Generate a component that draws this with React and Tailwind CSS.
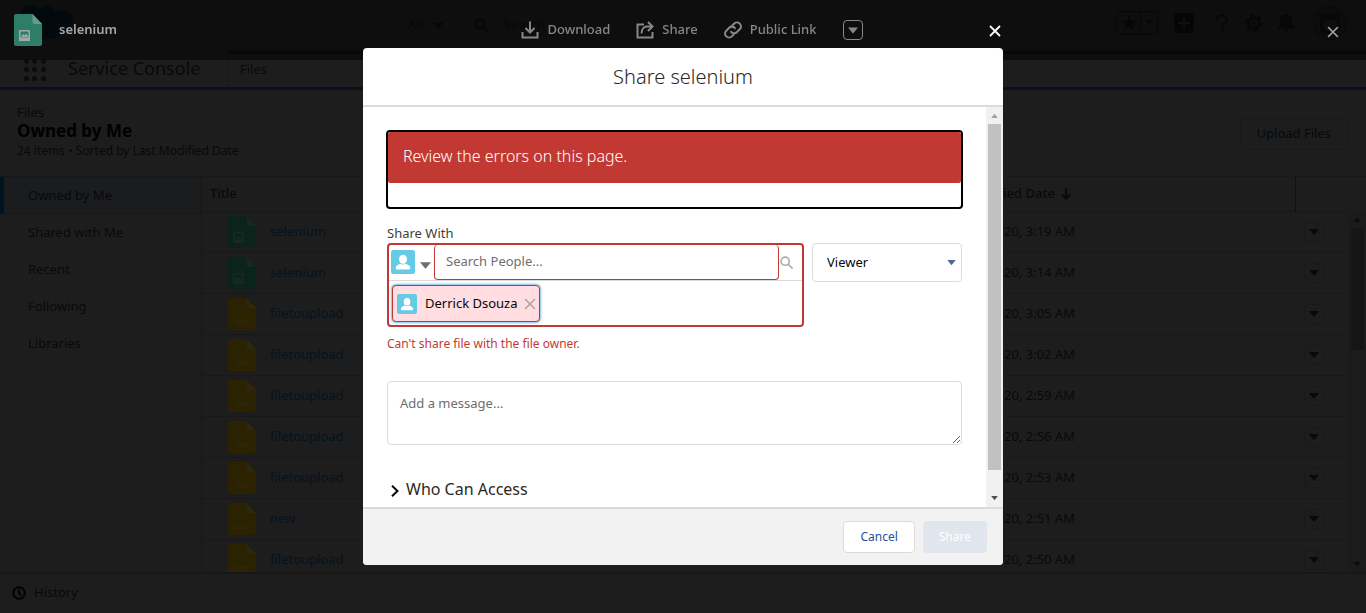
import React from "react";

const rows = [
  ["selenium", "3:19 AM", "image"],
  ["selenium", "3:14 AM", "image"],
  ["filetoupload", "3:05 AM", "txt"],
  ["filetoupload", "3:02 AM", "txt"],
  ["filetoupload", "2:59 AM", "txt"],
  ["filetoupload", "2:56 AM", "txt"],
  ["filetoupload", "2:53 AM", "txt"],
  ["new", "2:51 AM", "txt"],
  ["filetoupload", "2:50 AM", "txt"],
];

const views = ["Owned by Me", "Shared with Me", "Recent", "Following", "Libraries"];

function Caret({ className }) {
  return (
    <svg viewBox="0 0 10 6" className={className} fill="currentColor" aria-hidden="true">
      <path d="M0 0h10L5.500 5.600q-.5.5-1 0z" />
    </svg>
  );
}

function Cross({ className, strokeWidth = 2 }) {
  return (
    <svg viewBox="0 0 12 12" className={className} fill="none" stroke="currentColor" strokeWidth={strokeWidth} strokeLinecap="round" aria-hidden="true">
      <path d="M1.500 1.500l9 9M10.500 1.500l-9 9" />
    </svg>
  );
}

function SearchIcon({ className, strokeWidth = 2 }) {
  return (
    <svg viewBox="0 0 14 14" className={className} fill="none" stroke="currentColor" strokeWidth={strokeWidth} strokeLinecap="round" aria-hidden="true">
      <circle cx="5.600" cy="5.600" r="4.400" />
      <path d="M9 9l4 4" />
    </svg>
  );
}

function FileIcon({ kind, body, fold, mark, className }) {
  return (
    <svg viewBox="0 0 28 32" className={className} aria-hidden="true">
      <path d="M2 0h16.500l9.500 10v20a2 2 0 0 1-2 2H2a2 2 0 0 1-2-2V2a2 2 0 0 1 2-2z" fill={body} />
      <path d="M18.500 0l9.500 10h-7.500a2 2 0 0 1-2-2z" fill={fold} />
      {kind === "image" ? (
        <>
          <rect x="5" y="16" width="11" height="11" rx="0.500" fill={mark} />
          <rect x="6.500" y="17.500" width="8" height="6" fill={body} />
          <path d="M7 23l2-3 1.500 1.500 1.500-2 2.500 3.500z" fill={mark} />
        </>
      ) : (
        <text x="13" y="26.500" textAnchor="middle" fontSize="7.500" fill={mark} fontFamily="Noto Sans, sans-serif">
          TXT
        </text>
      )}
    </svg>
  );
}

function Person({ className }) {
  return (
    <svg viewBox="0 0 24 24" className={className} aria-hidden="true">
      <rect width="24" height="24" rx="2.500" fill="#65cae4" />
      <ellipse cx="12" cy="9.300" rx="4" ry="4.600" fill="#fff" />
      <path d="M4.800 18.800v-1.300c0-1.900 2.400-3 4.600-3.800 1.600 1.100 3.600 1.100 5.200 0 2.200.8 4.600 1.900 4.600 3.800v1.300q0 .8-.8.8H5.600q-.8 0-.8-.8z" fill="#fff" />
    </svg>
  );
}

function GlobalHeader() {
  return (
    <header className="flex h-[51px] shrink-0 items-start border-b border-[#191919] text-[#0f0f0f]">
      <svg viewBox="0 0 54 38" className="ml-5 mt-1 h-[38px] w-[54px] shrink-0" fill="#04141c" aria-hidden="true">
        <circle cx="11" cy="12" r="11" />
        <circle cx="27" cy="12" r="10" />
        <circle cx="42" cy="17" r="11" />
        <circle cx="9" cy="22" r="9" />
        <circle cx="20" cy="27" r="10" />
        <circle cx="31" cy="25" r="10" />
      </svg>
      <div className="ml-[321px] mt-[9px] flex h-8 w-[537px] items-center rounded border border-[#181818] text-[13px]">
        <button type="button" className="flex h-full w-[58px] items-center justify-between border-r border-[#181818] pl-3 pr-[9px]">
          All <Caret className="h-[7px] w-[11px]" />
        </button>
        <SearchIcon className="ml-5 h-3.5 w-3.5" />
        <input aria-label="Search" placeholder="Search" className="ml-4 min-w-0 flex-1 bg-transparent placeholder:text-[#0f0f0f]" />
      </div>
      <div className="ml-auto mr-[19px] mt-[5px] flex h-[35px] items-center">
        <div className="flex h-6 w-[42px] rounded border border-[#0e0e0e]">
          <button type="button" aria-label="Favorite" className="flex w-6 items-center justify-center border-r border-[#0e0e0e]">
            <svg viewBox="0 0 24 24" className="h-4 w-4" fill="#0c0c0c"><path d="M12 0l3.100 8.500H24l-7.200 5.400L19.500 23 12 17.600 4.500 23l2.700-9.100L0 8.500h8.900z" /></svg>
          </button>
          <button type="button" aria-label="Favorites list" className="flex flex-1 items-center justify-center">
            <Caret className="h-[5px] w-2" />
          </button>
        </div>
        <svg viewBox="0 0 20 20" className="ml-4 h-5 w-5"><rect width="20" height="20" rx="4" fill="#0c0c0c" /><path d="M10 4v12M4 10h12" stroke="#1d1d1d" strokeWidth="2" /></svg>
        <svg viewBox="0 0 12 18" className="ml-[22px] h-[18px] w-3" fill="none" stroke="#0f0f0f" strokeWidth="2.200" strokeLinecap="round"><path d="M1.200 5.500C1.200 0 10.800 0 10.800 5.500c0 3.500-4.500 3.200-4.500 7" /><circle cx="6.300" cy="16.600" r=".4" /></svg>
        <svg viewBox="0 0 20 20" className="ml-[17px] h-[18px] w-[18px]" fill="none" stroke="#0e0e0e"><circle cx="10" cy="10" r="6" strokeWidth="3" /><circle cx="10" cy="10" r="8.500" strokeWidth="2.500" strokeDasharray="4.400 4.500" /><path d="M11 6.500L8.500 10.500h3L9.500 14" strokeWidth="1.200" /></svg>
        <svg viewBox="0 0 18 18" className="ml-3.5 h-[18px] w-[18px]" fill="#0f0f0f"><path d="M9 0c4 0 6 2.800 6 6.500 0 4 .5 5.500 2.500 6.500v1.500H.5V13c2-1 2.500-2.500 2.500-6.500C3 2.800 5 0 9 0zM6.500 15.500h5q-.5 2-2.500 2t-2.500-2z" /></svg>
        <svg viewBox="0 0 34 34" className="ml-[18px] h-[34px] w-[34px]"><circle cx="17" cy="17" r="16.500" fill="#191919" stroke="#111" /><path d="M8 6l5 2h8l5-2 1 7v9l-5 6H12l-5-6v-9z" fill="#0c1013" /><path d="M10 17l5-4 3 2 4-1 3 4-2 6-6 2-6-3z" fill="#1e1e1e" /></svg>
      </div>
    </header>
  );
}

function ConsoleNav() {
  return (
    <nav className="flex h-[39px] shrink-0 border-b-[3px] border-[#160a1e] text-[#090909]">
      <button type="button" aria-label="App launcher" className="ml-6 mt-2 grid h-[22px] w-[22px] grid-cols-3 gap-[3px]">
        {Array.from({ length: 9 }, (_, i) => (
          <span key={i} className="h-[5px] w-[5px] rounded-full bg-[#0c0c0c]" />
        ))}
      </button>
      <span className="ml-[22px] mt-[3px] w-[159px] text-lg leading-7">Service Console</span>
      <a href="#files" className="flex-1 border-l border-t-[3px] border-l-[#191919] border-t-[#160a1e] pl-3 pt-[5px] text-[13px] leading-5">Files</a>
    </nav>
  );
}

function FileList() {
  return (
    <main className="flex min-h-0 flex-1 flex-col">
      <div className="flex h-[87px] shrink-0 items-start justify-between border-b border-[#181818] pl-[17px] pr-[18px] pt-[13px]">
        <div>
          <p className="text-[13px] leading-[18px]">Files</p>
          <h1 className="text-[17px] leading-[20px] font-bold text-black">Owned by Me</h1>
          <p className="mt-[2px] text-xs leading-4">24 items • Sorted by Last Modified Date</p>
        </div>
        <button type="button" className="mt-[15px] h-8 rounded border border-[#191919] px-4 text-[13px] text-[#05090f]">Upload Files</button>
      </div>
      <div className="flex min-h-0 flex-1">
        <aside className="w-[202px] shrink-0 border-r border-[#171717]">
          <ul>
            {views.map((view, i) => (
              <li key={view}>
                <a
                  href="#view"
                  className={
                    i === 0
                      ? "block h-[37px] border-b border-l-4 border-b-[#181818] border-l-[#00131f] bg-[#1a1c1e] pl-6 text-[13px] leading-[37px]"
                      : "block h-[37px] pl-7 text-[13px] leading-[37px]"
                  }
                >
                  {view}
                </a>
              </li>
            ))}
          </ul>
        </aside>
        <div className="relative min-w-0 flex-1 overflow-hidden">
          <table className="w-full table-fixed text-left text-[13px]">
            <thead>
              <tr className="h-[34px] border-b border-[#181818]">
                <th className="pl-2 font-medium">Title</th>
                <th className="w-[365px] pl-2 font-medium">
                  <div className="flex items-center gap-[6px]">
                    Last Modified Date
                    <svg viewBox="0 0 10 12" className="h-3 w-2.5" fill="none" stroke="#06090d" strokeWidth="2" aria-hidden="true"><path d="M5 0v10M1 6.500l4 4 4-4" /></svg>
                  </div>
                </th>
                <th aria-label="Actions" className="w-[71px] border-l border-[#101010]" />
              </tr>
            </thead>
            <tbody>
              {rows.map(([name, time, kind], i) => (
                <tr key={i} className="h-[41px] border-b border-[#181818]">
                  <td>
                    <div className="flex items-center gap-3.5 pl-[26px]">
                      <FileIcon
                        kind={kind}
                        className="h-8 w-7"
                        body={kind === "image" ? "#0a241c" : "#2b2202"}
                        fold={kind === "image" ? "#152923" : "#2f270c"}
                        mark={kind === "image" ? "#1c2724" : "#352c12"}
                      />
                      <a href="#file" className="text-[#05131f]">{name}</a>
                    </div>
                  </td>
                  <td className="pr-[220px] text-right whitespace-nowrap">2020, {time}</td>
                  <td>
                    <button type="button" aria-label={"Actions for " + name} className="ml-[9px] flex h-5 w-5 items-center justify-center rounded border border-[#191919]">
                      <Caret className="h-[6px] w-2.5" />
                    </button>
                  </td>
                </tr>
              ))}
            </tbody>
          </table>
          <div aria-hidden="true" className="absolute top-[34px] right-0 bottom-0 flex w-[18px] flex-col items-center bg-[#1b1b1b] text-[#0c0c0c]">
            <Caret className="mt-[7px] mb-[6px] h-1 w-2 shrink-0 rotate-180" />
            <div className="h-[122px] w-[13px] bg-[#151515]" />
            <Caret className="mt-auto mb-[6px] h-1 w-2 shrink-0" />
          </div>
        </div>
      </div>
    </main>
  );
}

function PreviewBar() {
  const action = "flex items-center gap-2";
  return (
    <div className="fixed inset-x-0 top-0 grid h-[60px] grid-cols-[1fr_auto_1fr] items-center bg-black/50 text-[13px] font-medium text-[#878787]">
      <div className="flex items-center gap-[17px] pl-3.5 font-semibold text-[#a5a5a5]">
        <FileIcon kind="image" className="h-8 w-7" body="#2e7d67" fold="#699b8d" mark="#a2aaa7" />
        selenium
      </div>
      <div className="flex items-center gap-[26px] pl-[18px]">
        <button type="button" className={action}>
          <svg viewBox="0 0 18 18" className="h-[18px] w-[18px]" fill="none" stroke="currentColor" strokeWidth="2"><path d="M1.500 11v5.500h15V11M9 .5V11M4.500 7L9 11.500 13.500 7" /></svg>
          Download
        </button>
        <button type="button" className={action}>
          <svg viewBox="0 0 18 18" className="h-[18px] w-[18px]" fill="none" stroke="currentColor" strokeWidth="2"><path d="M8 3.500H1.500v13h15V11M5.500 12.500C5.500 8 8 5.500 11 5.500h5M12 1l4.500 4.500L12 10" /></svg>
          Share
        </button>
        <button type="button" className={action}>
          <svg viewBox="0 0 24 24" className="h-[18px] w-[18px]" fill="none" stroke="currentColor" strokeWidth="2.800" strokeLinecap="round"><path d="M9.500 14.500a5 5 0 0 0 7.500.5l4-4a5.100 5.100 0 0 0-7.500-7.500L11 6M14.500 9.500A5 5 0 0 0 7 9l-4 4a5.100 5.100 0 0 0 7.500 7.500L13 18" /></svg>
          Public Link
        </button>
        <button type="button" aria-label="More actions" className="flex h-5 w-5 items-center justify-center rounded border border-[#878787]">
          <Caret className="h-[7px] w-2.5" />
        </button>
      </div>
      <button type="button" aria-label="Close preview" className="mt-1 mr-[27px] justify-self-end text-[#a5a5a5]">
        <Cross className="h-3 w-3" strokeWidth={1.6} />
      </button>
    </div>
  );
}

function ShareDialog() {
  return (
    <div role="dialog" aria-labelledby="share-title" className="fixed inset-x-0 inset-y-12 mx-auto flex w-full max-w-[640px] flex-col rounded bg-white text-[13px] text-[#16325c]">
      <button type="button" aria-label="Close" className="absolute -top-[23px] right-[2px] text-white">
        <Cross className="h-3 w-3" strokeWidth={1.8} />
      </button>
      <header className="border-b-2 border-[#dddbda] py-[14px] text-center">
        <h2 id="share-title" className="text-xl leading-[29px] font-light text-[#2b2826]">Share selenium</h2>
      </header>
      <div className="flex min-h-0 flex-1">
        <div className="min-w-0 flex-1 overflow-hidden px-6 pt-6">
          <div role="alert" className="-mx-px -mt-px h-[79px] rounded border-2 border-black">
            <p className="h-[51px] rounded-xs bg-[#c23934] px-[15px] text-base leading-[49px] font-light text-white">Review the errors on this page.</p>
          </div>
          <label htmlFor="people" className="mt-[15px] mb-px block leading-[18px] text-[#3e3e3c]">Share With</label>
          <div className="flex items-start gap-2">
            <div className="h-[84px] min-w-0 flex-1 rounded border-2 border-[#c23934]">
              <div className="flex h-9 items-center border-b border-[#dddbda]">
                <button type="button" aria-label="Pick an object" className="flex h-full w-[45px] items-center gap-[5px] pb-px pl-[2px] text-[#706e6b]">
                  <Person className="h-6 w-6" />
                  <Caret className="mt-[6px] h-[7px] w-[11px]" />
                </button>
                <input id="people" placeholder="Search People..." className="h-[35px] min-w-0 flex-1 self-start rounded border border-t-0 border-[#c23934] px-[11px] pb-[2px] outline-none placeholder:text-[#706e6b]" />
                <SearchIcon className="mr-[9px] ml-px h-[13px] w-[13px] text-[#b0adab]" strokeWidth={1.8} />
              </div>
              <div className="mx-[3px] mt-1 inline-flex h-[37px] items-center rounded border border-[#c23934] bg-[#ffdde1] pr-[3px] pl-1 text-[#080707] shadow-[0_0_3px_#0070d2]">
                <Person className="h-5 w-5" />
                <span className="mr-[6px] ml-2">Derrick Dsouza</span>
                <button type="button" aria-label="Remove Derrick Dsouza" className="text-[#a39a9a]">
                  <Cross className="h-3 w-3" strokeWidth={1.2} />
                </button>
              </div>
            </div>
            <div className="relative w-[150px]">
              <select aria-label="Access level" className="h-[39px] w-full appearance-none rounded border border-[#dddbda] bg-white px-3.5 text-[#080707]">
                <option>Viewer</option>
              </select>
              <Caret className="pointer-events-none absolute top-[17px] right-[6px] h-[5px] w-[9px] text-[#4f6a92]" />
            </div>
          </div>
          <p className="mt-2 text-xs leading-[18px] text-[#c23934]">Can't share file with the file owner.</p>
          <textarea aria-label="Message" placeholder="Add a message..." className="mt-7 block h-16 w-full resize-y rounded border border-[#dddbda] px-3 py-[11px] leading-5 placeholder:text-[#706e6b]" />
          <button type="button" className="mt-8 flex items-center gap-[7px] pl-1 text-base leading-6 text-[#2b2826]">
            <svg viewBox="0 0 8 12" className="mt-1 h-3 w-2" fill="none" stroke="#080707" strokeWidth="2" aria-hidden="true"><path d="M1 .8L6.500 6 1 11.200" /></svg>
            Who Can Access
          </button>
        </div>
        <div aria-hidden="true" className="flex w-[17px] shrink-0 flex-col items-center bg-[#f1f1f1]">
          <Caret className="mt-[7px] mb-[6px] h-1 w-[7px] shrink-0 rotate-180 text-[#a3a3a3]" />
          <div className="min-h-0 w-[13px] flex-1 bg-[#c1c1c1]" />
          <Caret className="mt-[26px] mb-[7px] h-1 w-[7px] shrink-0 text-[#505050]" />
        </div>
      </div>
      <footer className="flex justify-end gap-2 rounded-b border-t-2 border-[#dddbda] bg-[#f2f2f2] px-4 py-3 text-xs">
        <button type="button" className="h-8 rounded border border-[#dddbda] bg-white px-4 text-[#1f5297]">Cancel</button>
        <button type="button" disabled className="h-8 rounded bg-[#e0e5ee] px-4 text-white">Share</button>
      </footer>
    </div>
  );
}

export default function App() {
  return (
    <div className="flex h-screen flex-col overflow-hidden bg-[#1d1d1d] font-['Noto_Sans',sans-serif] text-[#090909]">
      <GlobalHeader />
      <ConsoleNav />
      <FileList />
      <footer className="flex h-[41px] shrink-0 items-center border-t-2 border-[#171717] px-3 pb-px">
        <button type="button" className="flex items-center gap-2 text-[13px]">
          <svg viewBox="0 0 14 14" className="h-3.5 w-3.5" fill="none" stroke="#020202" strokeWidth="2" aria-hidden="true"><circle cx="7" cy="7" r="5.800" /><path d="M7 3.500V7l2 2.200" /></svg>
          History
        </button>
      </footer>
      <PreviewBar />
      <ShareDialog />
    </div>
  );
}
